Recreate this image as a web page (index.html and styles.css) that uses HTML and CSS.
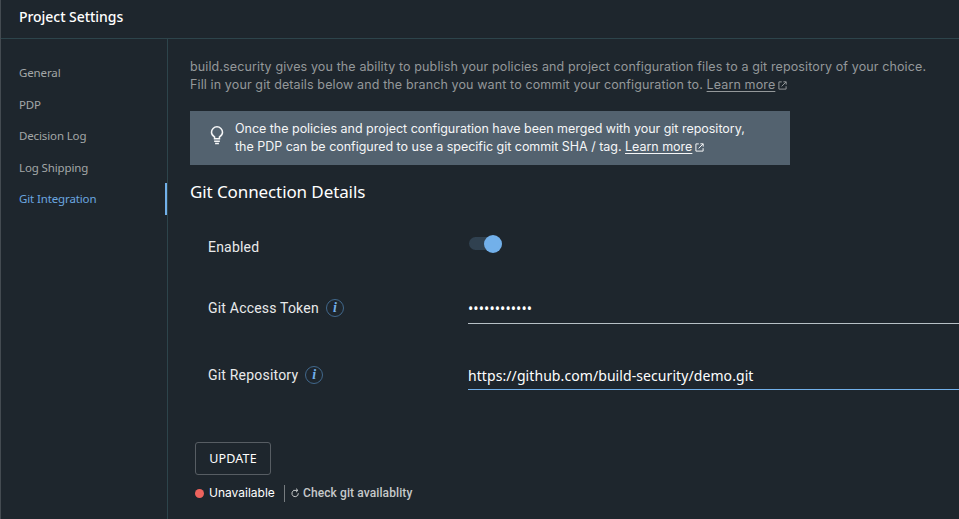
FILE: index.html
```html
<!DOCTYPE html>
<html lang="en">
<head>
<meta charset="utf-8">
<title>Project Settings</title>
<link rel="stylesheet" href="styles.css">
</head>
<body>
<div class="app">
  <header class="header"><h1 class="title">Project Settings</h1></header>
  <div class="body">
    <nav class="sidebar">
      <a class="nav-item">General</a>
      <a class="nav-item">PDP</a>
      <a class="nav-item">Decision Log</a>
      <a class="nav-item">Log Shipping</a>
      <a class="nav-item active">Git Integration</a>
    </nav>
    <main class="content">
      <p class="intro"><span class="intro-first">build.security gives you the ability to publish your policies and project configuration files to a git repository of your choice.</span><br><span class="intro-second">Fill in your git details below and the branch you want to commit your configuration to. <a class="link">Learn more</a></span><svg class="ext" viewBox="0 0 10 10"><path d="M4.2 1H1v8h8V5.8M6 .9h3.1V4M9 1 4 6"/></svg></p>
      <section class="callout">
        <svg class="bulb" viewBox="0 0 14 20"><path d="M4.4 13.500v-2C2.500 10.500 1.200 8.900 1.200 6.700a5.800 5.800 0 0 1 11.600 0c0 2.200-1.300 3.800-3.200 4.800v2zM4 16h6M5 18.400h4"/></svg>
        <p class="callout-text"><span class="callout-first">Once the policies and project configuration have been merged with your git repository,</span><br><span class="callout-second">the PDP can be configured to use a specific git commit SHA / tag. <a class="link">Learn more</a></span><svg class="ext" viewBox="0 0 10 10"><path d="M4.2 1H1v8h8V5.800M6 .9h3.100V4M9 1 4 6"/></svg></p>
      </section>
      <h2 class="section-title">Git Connection Details</h2>
      <div class="row row-enabled">
        <div class="label"><span>Enabled</span></div>
        <div class="toggle"><span class="knob"></span></div>
      </div>
      <div class="row row-token">
        <div class="label"><span class="token-label">Git Access Token</span><span class="info">i</span></div>
        <div class="field token"><span>••••••••••••</span></div>
      </div>
      <div class="row row-repo">
        <div class="label"><span class="repo-label">Git Repository</span><span class="info">i</span></div>
        <div class="field repo"><span>https://github.com/build-security/demo.git</span></div>
      </div>
      <button class="update"><span>UPDATE</span></button>
      <div class="status">
        <span class="dot"></span><span class="state">Unavailable</span>
        <span class="check"><svg class="refresh" viewBox="0 0 9 10"><path d="M2.700 2.600A3.200 3.200 0 1 0 7.300 5.200M2.300 2.400H6.800M5 .6 6.900 2.400 5 4.200"/></svg><span class="check-text">Check git availablity</span></span>
      </div>
    </main>
  </div>
</div>
</body>
</html>
```
FILE: styles.css
```css
* { box-sizing: border-box; }
body { margin: 0; background: #1e262d; color: #fff; overflow: hidden; }
h1, h2, p { margin: 0; font-weight: 400; }
.app { height: 519px; display: flex; flex-direction: column; border-left: 1px solid #444b51; }
.header { height: 39px; border-bottom: 1px solid #2d444b; padding: 7px 18px 0; }
.title { font: 500 14px/20px "Noto Sans", sans-serif; letter-spacing: -0.05px; }
.body { flex: 1; display: flex; min-height: 0; }
.sidebar { width: 167px; border-right: 1px solid #2d444b; padding-top: 18px; }
.nav-item { display: block; height: 31.5px; padding-left: 18px; font: 11.5px/32.5px "Noto Sans", sans-serif; letter-spacing: -0.13px; color: #a3a6a8; }
.nav-item.active { color: #6ba6e0; border-right: 2px solid #72b0ea; height: 32px; }
.content { flex: 1; min-width: 0; padding: 19px 0 0 22px; }
.intro, .callout-text { font: 12.5px/18px Inter, sans-serif; white-space: nowrap; }
.intro { color: #94989a; letter-spacing: 0.12px; height: 36px; }
.callout-text { letter-spacing: -0.02px; }
.link { text-decoration: underline; text-underline-offset: 2px; }
.ext { width: 9px; height: 9px; margin-left: 3px; vertical-align: -0.5px; fill: none; stroke: currentColor; stroke-width: 1.1; }
.callout { width: 600px; height: 54px; margin-top: 17px; background: #53626f; display: flex; padding: 9px 0 0 20px; color: #f5f6f7; }
.bulb { width: 14px; height: 19px; margin: 6px 11px 0 0; fill: none; stroke: currentColor; stroke-width: 1.6; }
.section-title { font: 17px/24px "Noto Sans", sans-serif; letter-spacing: -0.1px; margin-top: 15px; }
.row { display: flex; height: 30px; padding-left: 18px; }
.row-enabled { margin-top: 28px; }
.row-token { margin-top: 31px; height: 31px; }
.row-repo { margin-top: 36px; }
.label { width: 260px; height: 30px; display: flex; align-items: center; font: 14px/20px Roboto, sans-serif; color: #e9eaeb; letter-spacing: .2px; }
.info { width: 18px; height: 18px; border: 1px solid #41688c; border-radius: 50%; margin-left: 7px; text-align: center; font: italic bold 14px/15px "Liberation Serif", serif; color: #72b0ea; letter-spacing: 0; }
.toggle { width: 33px; height: 13px; background: #304150; border-radius: 7px; margin: 5px 0 0 1px; display: flex; justify-content: flex-end; align-items: center; }
.knob { width: 18px; height: 18px; border-radius: 50%; background: #72b0ea; }
.field { flex: 1; border-bottom: 1px solid #b7c0c6; white-space: nowrap; font: 14px/32px "Noto Sans", sans-serif; letter-spacing: .08px; }
.repo { border-color: #72b0ea; }
.update { display: block; width: 76px; height: 33px; margin: 52px 0 0 5px; padding: 0; border: 1px solid #575d63; border-radius: 3px; background: none; color: #fff; font: 12.5px/31px "Noto Sans", sans-serif; letter-spacing: .15px; }
.status { display: flex; align-items: center; height: 18px; margin: 9px 0 0 5px; font: 12px/18px Inter, sans-serif; }
.dot { width: 9px; height: 9px; border-radius: 50%; background: #ed635d; margin-right: 5px; }
.state { width: 66px; }
.check { display: flex; align-items: center; height: 17px; margin-left: 9px; border-left: 1px solid #777c80; padding-left: 6px; color: #c6c9ca; font: 500 12px/17px Roboto, sans-serif; letter-spacing: .1px; }
.refresh { width: 9px; height: 10px; margin-right: 3px; fill: none; stroke: currentColor; stroke-width: 1; }
```
